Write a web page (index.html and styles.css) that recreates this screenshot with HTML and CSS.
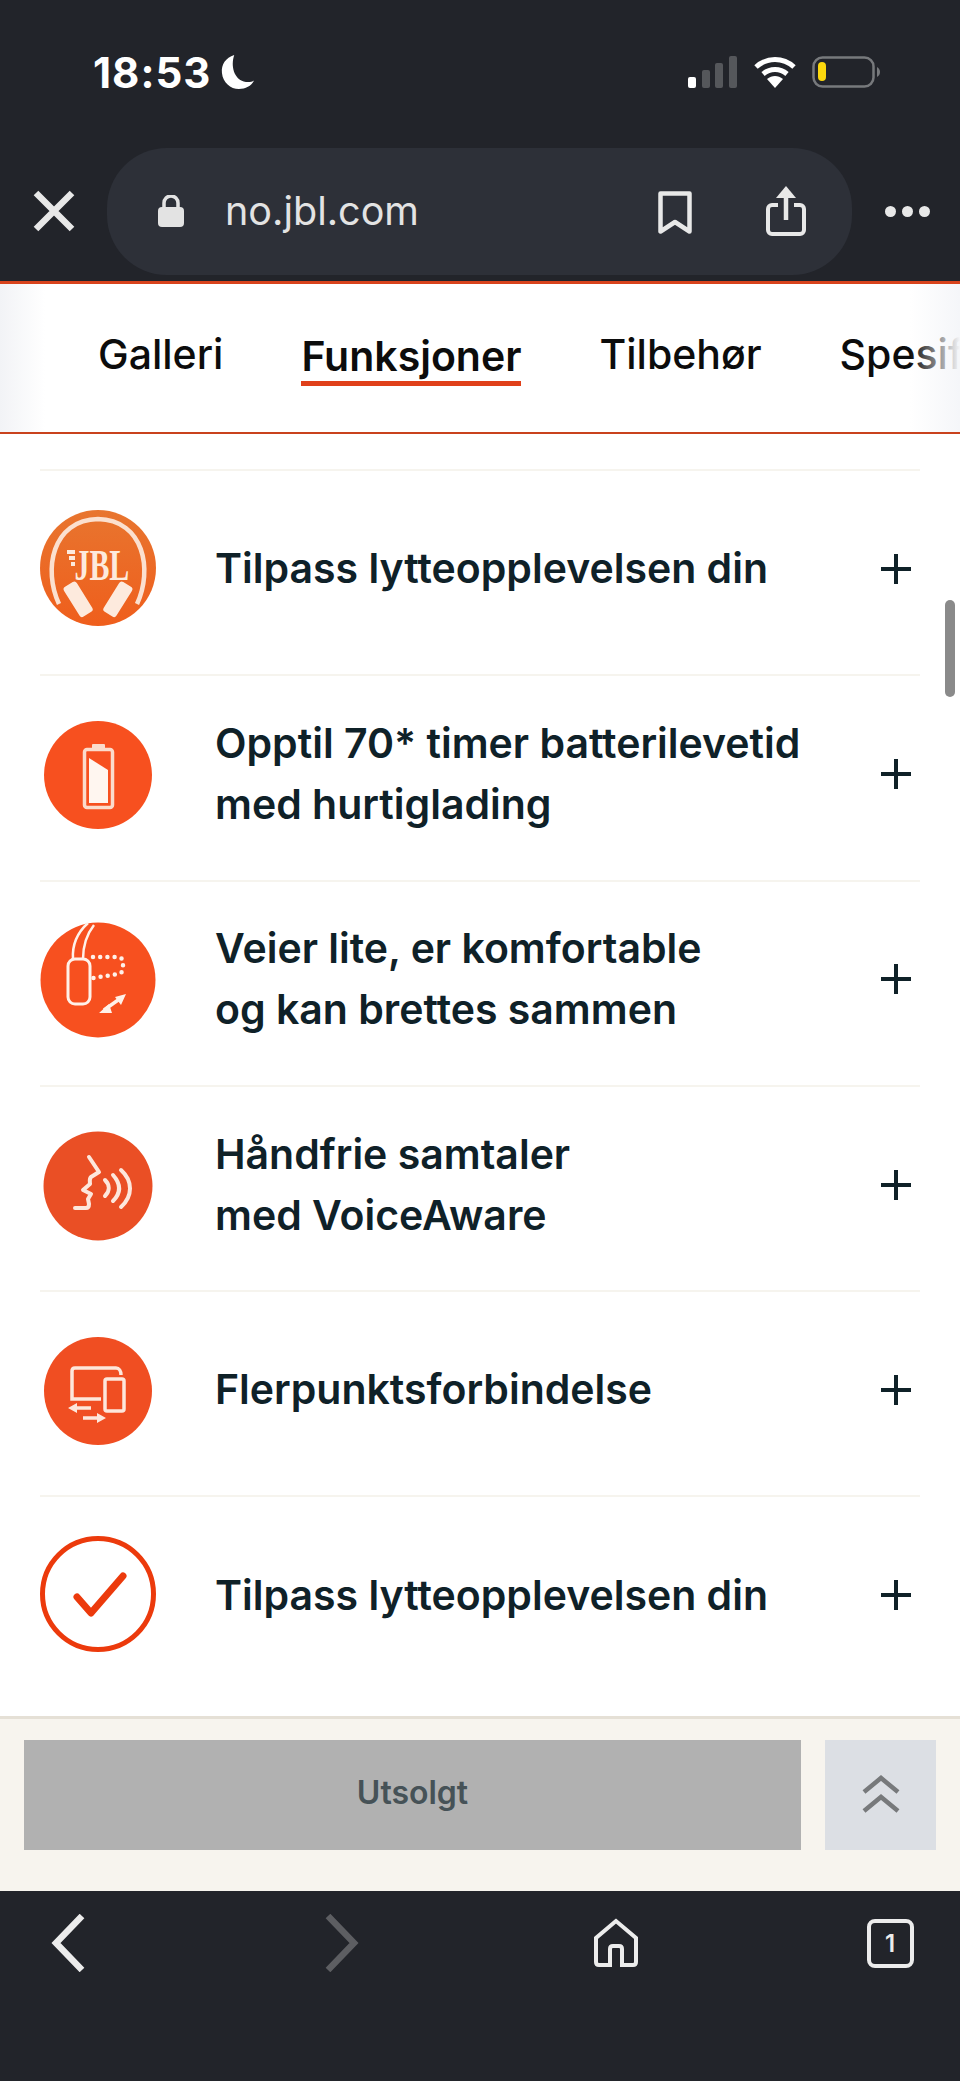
FILE: index.html
```html
<!DOCTYPE html>
<html lang="no">
<head>
    <meta charset="UTF-8">
    <meta name="viewport" content="width=device-width, initial-scale=1.0">
    <title>JBL - Funksjoner</title>
    <link rel="stylesheet" href="styles.css">
</head>
<body>
<div class="phone">

    <header class="top">
        <div class="status">
            <span class="time">18:53</span>
            <svg class="moon" width="34" height="36" viewBox="0 0 36 38"><path fill="#fff" d="M14 1C5 4 0 11 1 20c1 10 9 17 18 17 7 0 13-3 16-9-3 2-7 2-11 1C14 26 10 13 14 1z"/></svg>
            <div class="status-right">
                <svg width="50" height="32" viewBox="0 0 50 32"><rect x="0" y="21" width="8" height="11" rx="2" fill="#fff"/><rect x="14" y="14" width="8" height="18" rx="2" fill="#55575b"/><rect x="27" y="7" width="8" height="25" rx="2" fill="#55575b"/><rect x="41" y="0" width="8" height="32" rx="2" fill="#55575b"/></svg>
                <svg width="42" height="32" viewBox="0 0 42 32"><path fill="none" stroke="#fff" stroke-width="5" d="M2 11C13 1 29 1 40 11M9 18c7-6 17-6 24 0"/><path fill="#fff" d="M13 23c5-4 11-4 16 0l-8 9z"/></svg>
                <svg width="68" height="32" viewBox="0 0 68 32"><rect x="1.5" y="1.5" width="60" height="29" rx="9" fill="none" stroke="#77797c" stroke-width="2.5"/><rect x="6" y="6" width="8" height="19" rx="4" fill="#fcd80d"/><path fill="#77797c" d="M65 11c2 1 3 3 3 5s-1 4-3 5z"/></svg>
            </div>
        </div>
        <div class="browser">
            <svg class="close" width="42" height="42" viewBox="0 0 42 42"><path stroke="#e8e8e8" stroke-width="6.5" d="M3 3l36 36M39 3L3 39"/></svg>
            <div class="url">
                <svg width="26" height="32" viewBox="0 0 26 32"><path fill="none" stroke="#e3e3e3" stroke-width="3.5" d="M6 14V8a7 7 0 0 1 14 0v6"/><rect y="12" width="26" height="20" rx="4" fill="#e3e3e3"/></svg>
                <span class="url-text">no.jbl.com</span>
                <svg class="bookmark" width="34" height="44" viewBox="0 0 34 44"><path fill="none" stroke="#e8e8e8" stroke-width="4.5" stroke-linejoin="round" d="M2.5 2.5h29v38L17 31 2.5 40.500z"/></svg>
                <svg class="share" width="40" height="50" viewBox="0 0 40 50"><path fill="none" stroke="#e8e8e8" stroke-width="4" d="M12 19H6a4 4 0 0 0-4 4v21a4 4 0 0 0 4 4h28a4 4 0 0 0 4-4V23a4 4 0 0 0-4-4h-6"/><path stroke="#e8e8e8" stroke-width="4.500" d="M20 6v28"/><path fill="#e8e8e8" d="M20 0l10 12H10z"/></svg>
            </div>
            <div class="dots"><i></i><i></i><i></i></div>
        </div>
    </header>

    <nav class="tabs">
        <a>Galleri</a>
        <a class="active">Funksjoner</a>
        <a>Tilbehør</a>
        <a>Spesifikasjoner</a>
    </nav>

    <main class="list">
        <div class="thumb"></div>

        <div class="row">
            <svg class="icon" viewBox="0 2 116 116">
                <defs><linearGradient id="g1" x1="0" y1="0" x2="0" y2="1"><stop offset="0" stop-color="#e8752f"/><stop offset="1" stop-color="#ef5e1c"/></linearGradient></defs>
                <circle cx="58" cy="58" r="58" fill="url(#g1)"/>
                <path fill="none" stroke="#fbe0cf" stroke-width="4.500" d="M19 94C3 60 12 10 58 9c46 1 55 51 39 85"/>
                <rect x="31" y="72" width="15" height="35" rx="3" fill="#fdeadd" transform="rotate(-32 38 90)"/>
                <rect x="70" y="72" width="15" height="35" rx="3" fill="#fdeadd" transform="rotate(32 78 90)"/>
                <text x="91" y="70" class="jbl" text-anchor="middle" transform="scale(.68 1)">JBL</text>
                <path fill="#fdeadd" d="M27 40h8v4h-8zM29 46h6v4h-6zM31 52h4v4h-4z"/>
            </svg>
            <h3>Tilpass lytteopplevelsen din</h3>
            <span class="plus"></span>
        </div>

        <div class="row">
            <svg class="icon" viewBox="0 0 116 116">
                <circle cx="58" cy="58" r="54" fill="#f7501f"/>
                <rect x="44.500" y="32.500" width="28" height="58" rx="2.500" fill="none" stroke="#fbdccc" stroke-width="3.500"/>
                <rect x="52" y="27" width="13" height="5" rx="1" fill="#fbdccc"/>
                <path fill="#fff6f0" d="M49 41l19 12v33H49z"/>
            </svg>
            <h3>Opptil 70* timer batterilevetid<br>med hurtiglading</h3>
            <span class="plus"></span>
        </div>

        <div class="row">
            <svg class="icon" viewBox="0 0 116 116">
                <circle cx="58" cy="58" r="57.500" fill="#f7501f"/>
                <path fill="none" stroke="#fff1e9" stroke-width="2.500" d="M33 37C32 22 38 10 48 1M43 37C43 24 47 12 54 3"/>
                <rect x="28" y="37" width="22" height="45" rx="7" fill="none" stroke="#fff1e9" stroke-width="3"/>
                <path fill="none" stroke="#fff1e9" stroke-width="4.500" stroke-linecap="round" stroke-dasharray="0 7.200" d="M53 35h24c5 0 6 3 6 6v5c0 4-2 5-5 6L53 56"/>
                <path stroke="#fff1e9" stroke-width="3.500" d="M64 88l17-12"/>
                <path fill="#fff1e9" d="M59 91l10-9 3 9zM86 72l-11 3 6 8z"/>
            </svg>
            <h3>Veier lite, er komfortable<br>og kan brettes sammen</h3>
            <span class="plus"></span>
        </div>

        <div class="row">
            <svg class="icon" viewBox="0 0 116 116">
                <circle cx="58" cy="58" r="54.500" fill="#ea4f25"/>
                <path fill="none" stroke="#fde7dc" stroke-width="4" stroke-linecap="round" stroke-linejoin="round" d="M49 29l10 15-8 5c-2 2-1 5-1 7l-7 6 8 4-3 5 1 5c0 3-1 4-3 4H35"/>
                <path fill="none" stroke="#fde7dc" stroke-width="4" stroke-linecap="round" d="M65 52c5 5 5 11 0 16M73 47c8 9 8 18 0 26M81 42c12 11 12 26 0 37"/>
            </svg>
            <h3>Håndfrie samtaler<br>med VoiceAware</h3>
            <span class="plus"></span>
        </div>

        <div class="row">
            <svg class="icon" viewBox="0 3 116 116">
                <circle cx="58" cy="61" r="54" fill="#f04e22"/>
                <path fill="none" stroke="#fde7dc" stroke-width="3.500" d="M61 69H32V41c0-2 1-3 3-3h41c3 0 5 3 5 7"/>
                <rect x="65" y="49" width="19" height="32" rx="2" fill="none" stroke="#fde7dc" stroke-width="3.500"/>
                <path stroke="#fde7dc" stroke-width="3.500" d="M34 78h17M43 88h17"/>
                <path fill="#fde7dc" d="M28 78l9-5v10zM66 88l-9-5v10z"/>
            </svg>
            <h3>Flerpunktsforbindelse</h3>
            <span class="plus"></span>
        </div>

        <div class="row">
            <svg class="icon" viewBox="0 2 116 116">
                <circle cx="58" cy="58" r="55.500" fill="none" stroke="#ec3a0c" stroke-width="5"/>
                <path fill="none" stroke="#ec3a0c" stroke-width="7" stroke-linecap="round" stroke-linejoin="round" d="M37 61l14 16 32-37"/>
            </svg>
            <h3>Tilpass lytteopplevelsen din</h3>
            <span class="plus"></span>
        </div>
    </main>

    <section class="buy">
        <button class="sold" type="button">Utsolgt</button>
        <button class="up" type="button">
            <svg width="38" height="38" viewBox="0 0 38 38"><path fill="none" stroke="#77797b" stroke-width="4.500" d="M2 17L19 3l17 14M2 36l17-14 17 14"/></svg>
        </button>
    </section>

    <footer class="bottom">
        <span class="slot"><svg width="34" height="58" viewBox="0 0 34 58"><path fill="none" stroke="#ececec" stroke-width="6.500" d="M31 2L5 29l26 27"/></svg></span>
        <span class="slot"><svg width="34" height="58" viewBox="0 0 34 58"><path fill="none" stroke="#5d5e62" stroke-width="6.500" d="M3 2l26 27L3 56"/></svg></span>
        <span class="slot"><svg width="46" height="50" viewBox="0 0 46 50"><path fill="none" stroke="#ececec" stroke-width="4" d="M23 3L3 20v24c0 2 1 3 3 3h11V31c0-2 1-3 3-3h6c2 0 3 1 3 3v16h11c2 0 3-1 3-3V20z"/></svg></span>
        <span class="slot"><span class="count">1</span></span>
    </footer>

</div>
</body>
</html>
```

FILE: styles.css
```css
html, body {
    margin: 0;
    padding: 0;
}
body {
    font-family: 'Inter', 'Liberation Sans', sans-serif;
    background: #fff;
}
.phone {
    width: 960px;
    height: 2081px;
    display: flex;
    flex-direction: column;
    overflow: hidden;
}

/* top bars */
.top {
    background: #22242a;
    height: 281px;
    flex-shrink: 0;
    border-bottom: 3px solid #d8431c;
}
.status {
    height: 144px;
    display: flex;
    align-items: center;
    padding-left: 93px;
    padding-right: 80px;
    box-sizing: border-box;
}
.time {
    color: #fff;
    font-size: 42px;
    font-weight: 700;
    letter-spacing: 1px;
}
.moon {
    margin-left: 10px;
}
.status-right {
    margin-left: auto;
    display: flex;
    align-items: center;
    gap: 16px;
}
.browser {
    display: flex;
    align-items: center;
    height: 137px;
    padding-left: 33px;
    padding-bottom: 3px;
    box-sizing: border-box;
}
.close {
    flex-shrink: 0;
}
.url {
    margin-left: 32px;
    width: 745px;
    height: 127px;
    border-radius: 60px;
    background: #2d3038;
    display: flex;
    align-items: center;
    padding-left: 51px;
    box-sizing: border-box;
}
.url-text {
    color: #e3e3e3;
    font-size: 39.5px;
    margin-left: 41px;
}
.bookmark {
    margin-left: 239px;
    margin-top: 3px;
}
.share {
    margin-left: 74px;
}
.dots {
    margin-left: 33px;
    display: flex;
    gap: 6px;
}
.dots i {
    width: 11px;
    height: 11px;
    border-radius: 50%;
    background: #e8e8e8;
}

/* tabs */
.tabs {
    position: relative;
    height: 150px;
    flex-shrink: 0;
    box-sizing: border-box;
    border-bottom: 2px solid #c9421d;
    display: flex;
    align-items: flex-start;
    gap: 78px;
    padding-left: 98px;
    padding-top: 47px;
    white-space: nowrap;
    overflow: hidden;
    font-size: 41px;
    line-height: 46px;
    font-weight: 500;
    color: #0c0c0c;
}
.tabs::before,
.tabs::after {
    content: "";
    position: absolute;
    top: 0;
    bottom: 0;
}
.tabs::before {
    left: 0;
    width: 45px;
    background: linear-gradient(to right, #f2f3f6, #fff);
}
.tabs::after {
    right: 0;
    width: 50px;
    background: linear-gradient(to right, rgba(248, 249, 251, 0), #f5f6f9);
}
.tabs .active {
    font-weight: 600;
    margin-top: 2px;
    padding-bottom: 2px;
    border-bottom: 5px solid #e0401a;
}

/* feature list */
.list {
    position: relative;
    flex: 1;
    overflow: hidden;
    padding: 35px 40px 0;
    background: #fff;
}
.thumb {
    position: absolute;
    right: 5px;
    top: 166px;
    width: 10px;
    height: 97px;
    border-radius: 5px;
    background: #8a8a8a;
}
.row {
    height: 205.3px;
    box-sizing: border-box;
    border-top: 2px solid #f6f4ee;
    display: flex;
    align-items: center;
    padding-right: 9px;
    padding-bottom: 6px;
}
.icon {
    width: 116px;
    height: 116px;
    flex-shrink: 0;
    overflow: visible;
}
.jbl {
    font-family: 'Liberation Serif', serif;
    font-weight: 700;
    font-size: 44px;
    fill: #fdeadd;
}
.row h3 {
    margin: 0 0 2px 59px;
    flex: 1;
    font-size: 41px;
    line-height: 61px;
    font-weight: 600;
    color: #0f2128;
}
.plus {
    width: 30px;
    height: 30px;
    margin-bottom: 2px;
    flex-shrink: 0;
    background:
        linear-gradient(#0f2128, #0f2128) center / 100% 4px no-repeat,
        linear-gradient(#0f2128, #0f2128) center / 4px 100% no-repeat;
}

/* buy bar */
.buy {
    height: 175px;
    flex-shrink: 0;
    box-sizing: border-box;
    background: #f7f4ee;
    border-top: 3px solid #e5e0d6;
    display: flex;
    gap: 24px;
    padding: 21px 24px 0;
    align-items: flex-start;
}
.sold,
.up {
    height: 110px;
    border: none;
    font-family: inherit;
}
.sold {
    width: 777px;
    padding: 0 0 6px;
    background: #b1b1b1;
    color: #465257;
    font-size: 32px;
    font-weight: 600;
}
.up {
    width: 111px;
    padding: 0 0 3px;
    background: #dcdfe4;
    display: flex;
    align-items: center;
    justify-content: center;
}

/* browser bottom bar */
.bottom {
    height: 190px;
    flex-shrink: 0;
    background: #22242a;
    display: flex;
    gap: 164px;
    padding-left: 13px;
    padding-top: 23px;
    box-sizing: border-box;
}
.slot {
    width: 110px;
    height: 58px;
    display: flex;
    align-items: center;
    justify-content: center;
}
.count {
    width: 47px;
    height: 49px;
    box-sizing: border-box;
    border: 4px solid #ececec;
    border-radius: 8px;
    color: #ececec;
    font-size: 24px;
    font-weight: 600;
    display: flex;
    align-items: center;
    justify-content: center;
}
```
